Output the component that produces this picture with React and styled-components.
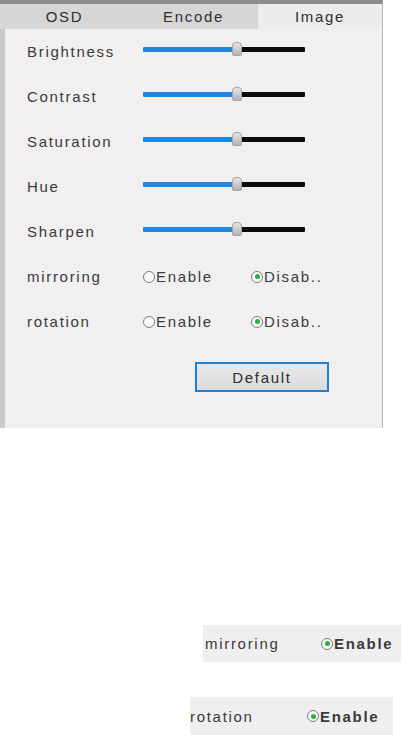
import styled, { createGlobalStyle } from "styled-components";

const Global = createGlobalStyle`
  html, body {
    margin: 0;
    padding: 0;
    background: #ffffff;
  }
  body {
    font-family: "Liberation Sans", Arial, sans-serif;
    font-size: 15px;
    letter-spacing: 1.7px;
    color: #3b3b3b;
  }
`

const Page = styled.div`
  width: 403px;
  height: 735px;
  overflow: hidden;
`

const Panel = styled.div`
  width: 382px;
  height: 424px;
  border-top: 4px solid #8c8c8c;
  border-right: 1px solid #b9b9b9;
  display: flex;
  flex-direction: column;
  background: #f1efef;
`

const Tabs = styled.div`
  display: flex;
  height: 25px;
  background: #d6d6d6;
`

const Tab = styled.div`
  width: ${(p) => p.w}px;
  display: flex;
  align-items: center;
  justify-content: center;
  background: ${(p) => (p.active ? "#ececec" : "transparent")};
  color: #2e2e2e;
`

const Body = styled.div`
  flex: 1;
  border-left: 5px solid #c9c9c9;
  padding-left: 22px;
  display: flex;
  flex-direction: column;
`

const Row = styled.div`
  height: 45px;
  display: flex;
  align-items: center;
`

const Label = styled.div`
  width: 116px;
  color: #3a3a3a;
`

const Track = styled.div`
  position: relative;
  width: 162px;
  height: 5px;
  display: flex;
  margin-top: -4px;
`

const Fill = styled.div`
  height: 100%;
  background: ${(p) => p.color};
  width: ${(p) => p.w}px;
  border-radius: 1px;
`

const Thumb = styled.div`
  position: absolute;
  left: 89px;
  top: -5px;
  width: 10px;
  height: 14px;
  border-radius: 4px 4px 2px 2px;
  background: linear-gradient(#e6e6e6, #b3b3b3);
  border: 1px solid #a3a3a3;
  box-sizing: border-box;
`

const Option = styled.label`
  display: flex;
  align-items: center;
  width: ${(p) => p.w || "auto"};
  font-weight: ${(p) => (p.bold ? "bold" : "normal")};
`

const Circle = styled.span`
  width: 12px;
  height: 12px;
  border-radius: 50%;
  border: 1px solid #7d7d7d;
  box-sizing: border-box;
  background: #fafafa;
  display: flex;
  align-items: center;
  justify-content: center;
  margin-right: 1px;
  &::after {
    content: "";
    width: 5px;
    height: 5px;
    border-radius: 50%;
    background: ${(p) => (p.on ? "#27b23a" : "transparent")};
  }
`

const Footer = styled.div`
  display: flex;
  padding-left: 168px;
  margin-top: 18px;
`

const Button = styled.button`
  width: 134px;
  height: 30px;
  border: 2px solid #1f7fd8;
  background: linear-gradient(#e8e8e8, #dcdcdc);
  font-family: "Liberation Sans", Arial, sans-serif;
  font-size: 15px;
  letter-spacing: 1.7px;
  color: #2c2c2c;
  padding: 0;
`

const Snips = styled.div`
  display: flex;
  flex-direction: column;
  padding-top: 197px;
  gap: 35px;
`

const Snip = styled.div`
  margin-left: ${(p) => p.x}px;
  width: ${(p) => p.w}px;
  height: ${(p) => p.h}px;
  background: #efefef;
  display: flex;
  align-items: center;
  padding-left: ${(p) => p.pad}px;
  box-sizing: border-box;
  color: #3a3a3a;
`

const SnipLabel = styled.div`
  width: ${(p) => p.w}px;
`

const sliders = ["Brightness", "Contrast", "Saturation", "Hue", "Sharpen"];

function Slider() {
  return (
    <Track>
      <Fill color="#1c86e0" w={92} />
      <Fill color="#0b0b0b" w={70} />
      <Thumb />
    </Track>
  );
}

export default function App() {
  return (
    <Page>
      <Global />
      <Panel>
        <Tabs>
          <Tab w={129}>OSD</Tab>
          <Tab w={129}>Encode</Tab>
          <Tab w={124} active>Image</Tab>
        </Tabs>
        <Body>
          {sliders.map((s) => (
            <Row key={s}>
              <Label>{s}</Label>
              <Slider />
            </Row>
          ))}
          {["mirroring", "rotation"].map((s) => (
            <Row key={s}>
              <Label>{s}</Label>
              <Option w="108px">
                <Circle />Enable
              </Option>
              <Option>
                <Circle on />Disab..
              </Option>
            </Row>
          ))}
          <Footer>
            <Button>Default</Button>
          </Footer>
        </Body>
      </Panel>
      <Snips>
        <Snip x={203} w={198} h={37} pad={2}>
          <SnipLabel w={116}>mirroring</SnipLabel>
          <Option bold>
            <Circle on />Enable
          </Option>
        </Snip>
        <Snip x={190} w={203} h={38} pad={0}>
          <SnipLabel w={117}>rotation</SnipLabel>
          <Option bold>
            <Circle on />Enable
          </Option>
        </Snip>
      </Snips>
    </Page>
  );
}
